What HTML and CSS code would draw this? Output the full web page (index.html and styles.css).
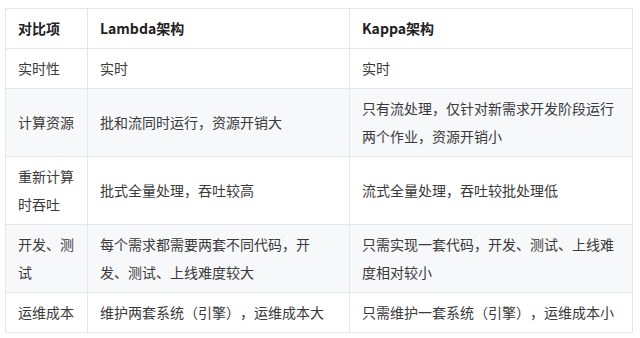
FILE: index.html
```html
<!DOCTYPE html>
<html lang="zh-CN">
<head>
<meta charset="utf-8">
<link rel="stylesheet" href="styles.css">
</head>
<body>
<div class="wrap">
<table class="cmp">
  <colgroup><col class="c1"><col class="c2"><col class="c3"></colgroup>
  <thead>
    <tr><th>对比项</th><th>Lambda架构</th><th>Kappa架构</th></tr>
  </thead>
  <tbody>
    <tr><td>实时性</td><td>实时</td><td>实时</td></tr>
    <tr class="alt"><td>计算资源</td><td>批和流同时运行，资源开销大</td><td>只有流处理，仅针对新需求开发阶段运行两个作业，资源开销小</td></tr>
    <tr><td>重新计算时吞吐</td><td>批式全量处理，吞吐较高</td><td>流式全量处理，吞吐较批处理低</td></tr>
    <tr class="alt"><td>开发、测试</td><td>每个需求都需要两套不同代码，开发、测试、上线难度较大</td><td>只需实现一套代码，开发、测试、上线难度相对较小</td></tr>
    <tr><td>运维成本</td><td>维护两套系统（引擎），运维成本大</td><td>只需维护一套系统（引擎），运维成本小</td></tr>
  </tbody>
</table>
</div>
</body>
</html>
```
FILE: styles.css
```css
html, body {
  margin: 0;
  padding: 0;
  background: #fff;
}
.wrap {
  padding: 8px 0 0 5px;
}
.cmp {
  border-collapse: collapse;
  table-layout: fixed;
  width: 627px;
  font-family: "Noto Sans CJK SC", "Noto Sans", sans-serif;
  font-size: 14px;
  line-height: 28px;
  color: #3a3a3a;
  text-spacing-trim: space-all;
}
.c1 { width: 82px; }
.c2 { width: 262px; }
.c3 { width: 283px; }
.cmp th, .cmp td {
  border: 1px solid #e4e6ea;
  padding: 5px 12px 6px 12px;
  text-align: left;
  vertical-align: middle;
}
.cmp th {
  font-weight: 700;
  color: #222;
}
.cmp tr.alt td {
  background: #f6f8fa;
}
```
